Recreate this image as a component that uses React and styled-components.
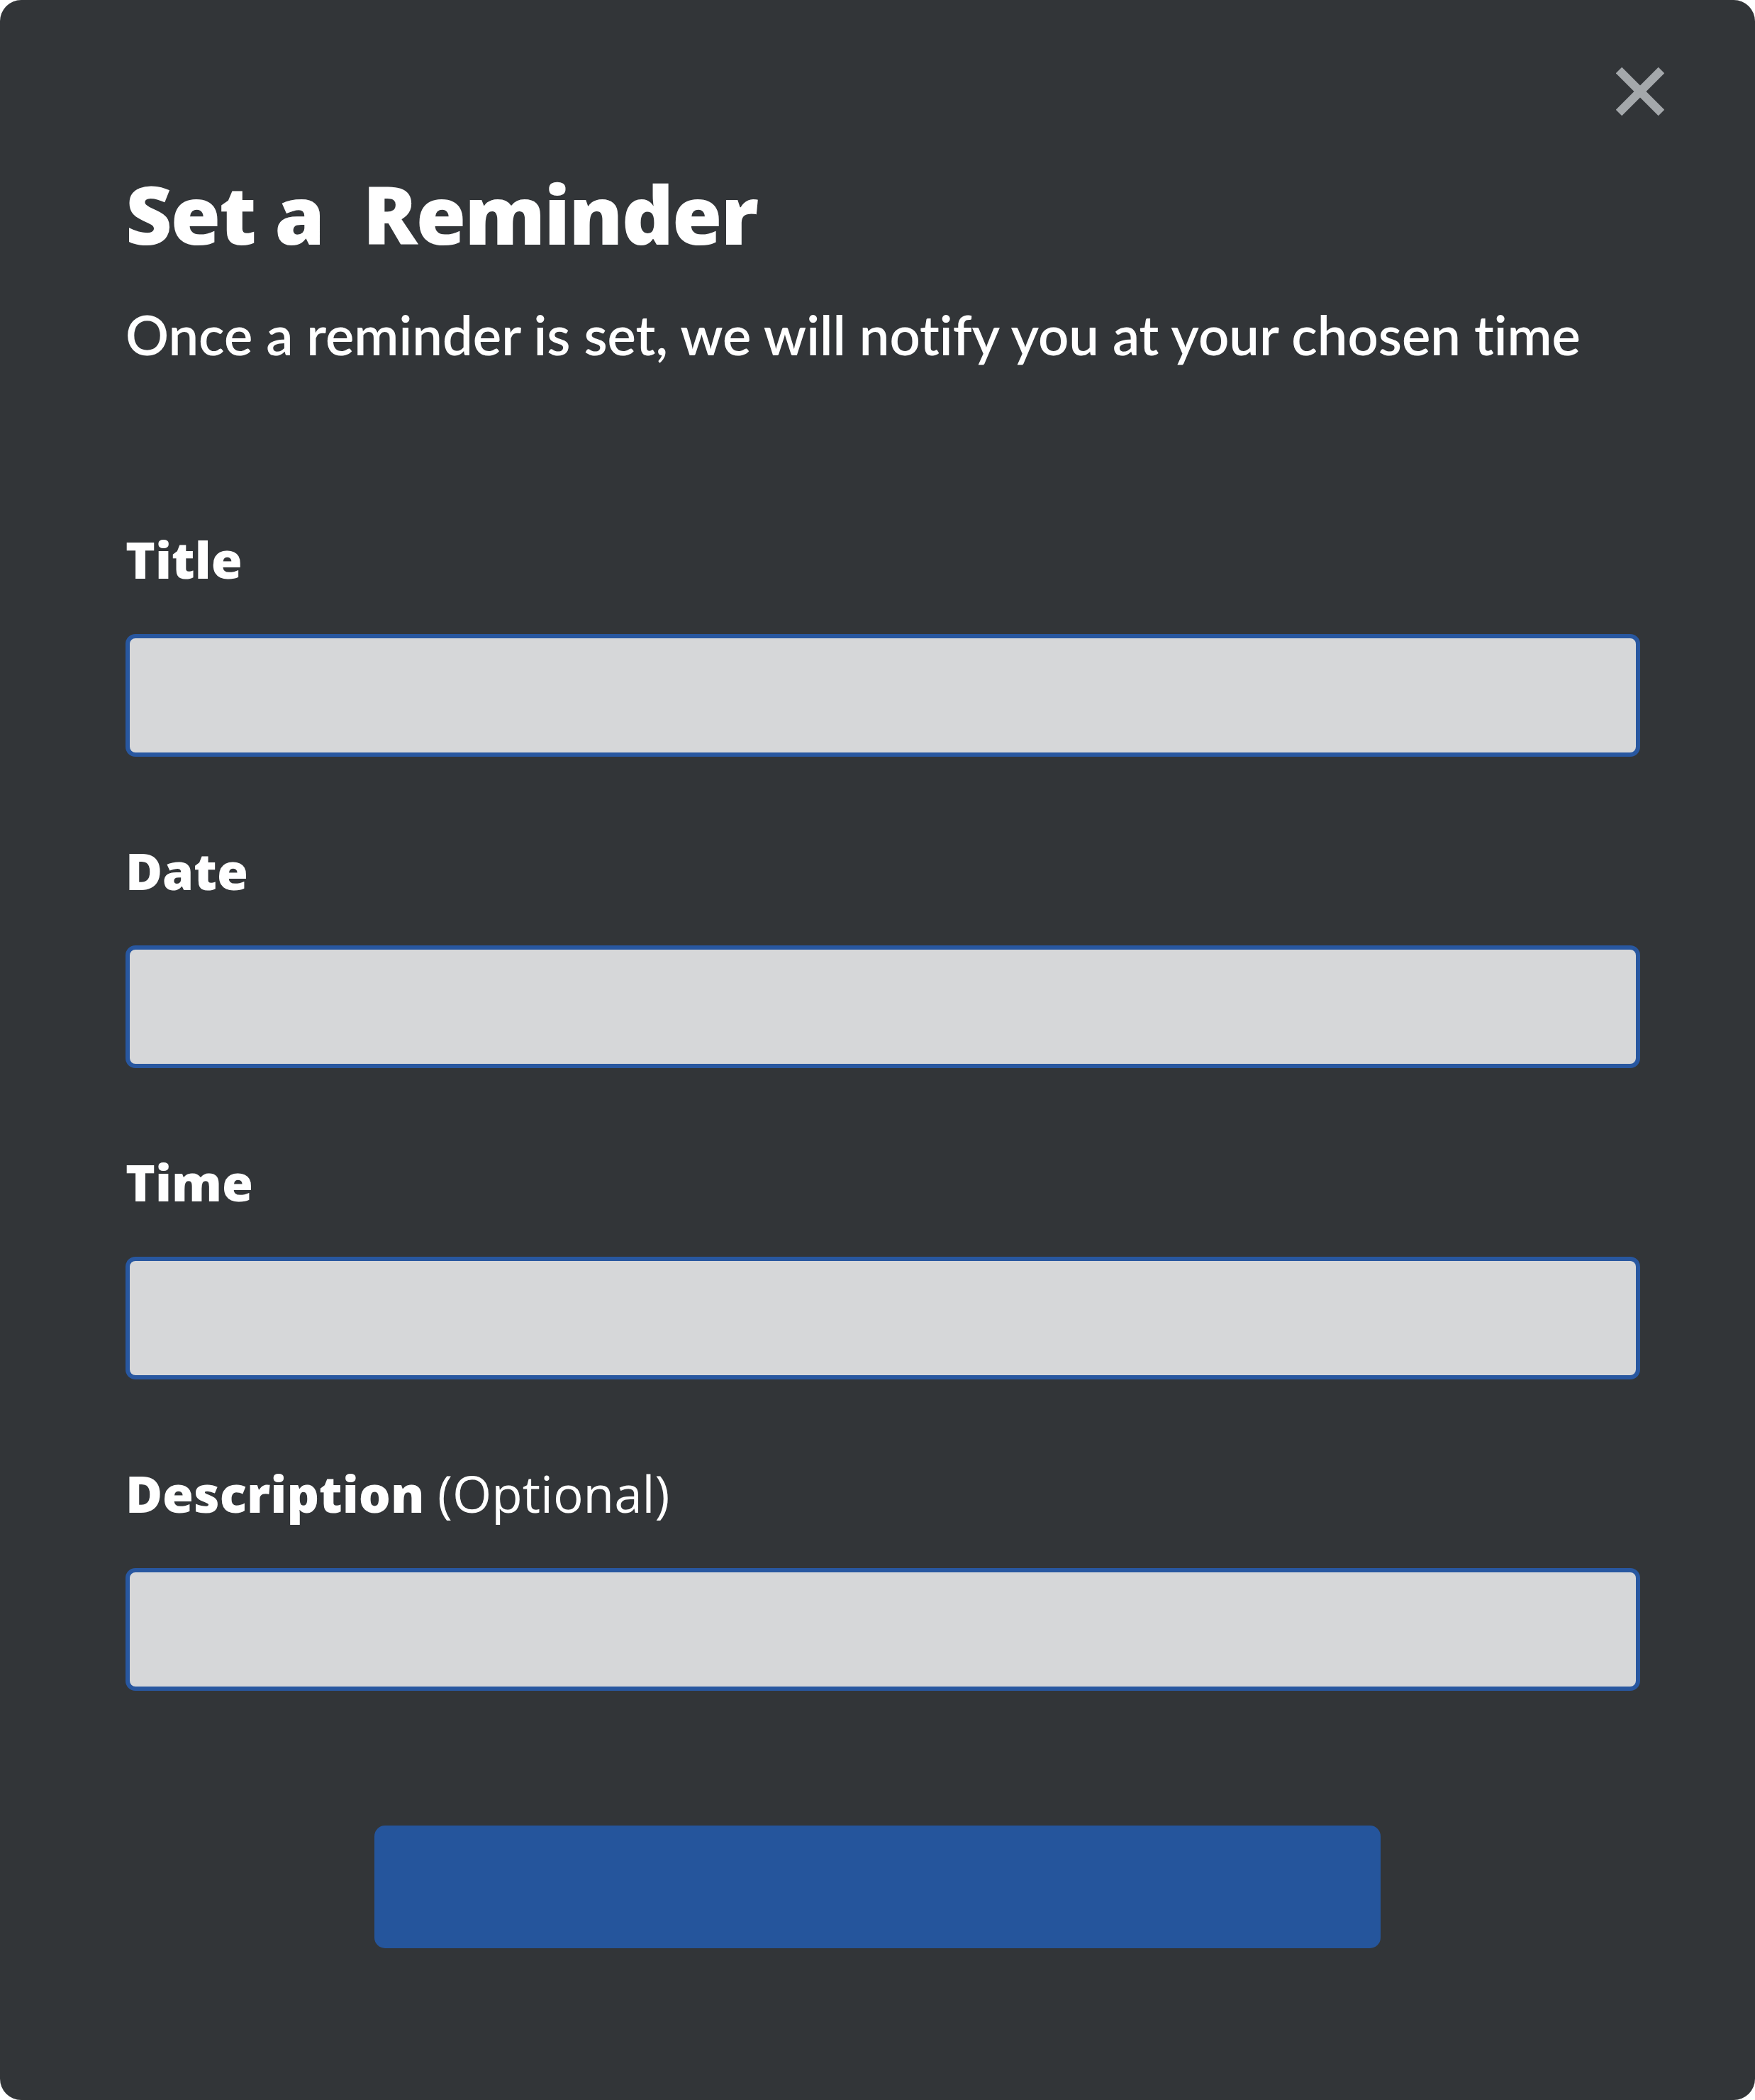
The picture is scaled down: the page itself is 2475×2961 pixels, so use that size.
import React from "react";
import styled, { createGlobalStyle } from "styled-components";

const GlobalStyle = createGlobalStyle`
  html, body {
    margin: 0;
    padding: 0;
    background: #ffffff;
  }
  * {
    box-sizing: border-box;
  }
`;

export default function App() {
  return (
    <>
      <GlobalStyle />
      <Panel>
        <CloseButton aria-label="Close">
          <svg width="68" height="68" viewBox="0 0 68 68">
            <line x1="4" y1="4" x2="64" y2="64" />
            <line x1="64" y1="4" x2="4" y2="64" />
          </svg>
        </CloseButton>

        <Heading>Set a&nbsp; Reminder</Heading>
        <Subtitle>Once a reminder is set, we will notify you at your chosen time</Subtitle>

        <Form>
          <Field>
            <Label>Title</Label>
            <Input type="text" />
          </Field>
          <Field>
            <Label>Date</Label>
            <Input type="text" />
          </Field>
          <Field>
            <Label>Time</Label>
            <Input type="text" />
          </Field>
          <Field>
            <Label>
              Description <Optional>(Optional)</Optional>
            </Label>
            <Input type="text" />
          </Field>
        </Form>

        <ButtonRow>
          <SubmitButton type="button" />
        </ButtonRow>
      </Panel>
    </>
  );
}

const Panel = styled.div`
  position: relative;
  height: 100vh;
  background: #323538;
  border-radius: 30px;
  padding: 232px 162px 0 177px;
  font-family: "Open Sans", "Noto Sans", sans-serif;
  color: #ffffff;
  overflow: hidden;
`;

const CloseButton = styled.button`
  position: absolute;
  top: 95px;
  right: 128px;
  width: 68px;
  height: 68px;
  padding: 0;
  border: none;
  background: none;
  cursor: pointer;

  svg {
    display: block;
  }

  line {
    stroke: #a4a8ab;
    stroke-width: 12;
  }
`;

const Heading = styled.h1`
  margin: 0;
  font-size: 114px;
  line-height: 137px;
  font-weight: 800;
  letter-spacing: -2px;
`;

const Subtitle = styled.p`
  margin: 53px 0 0;
  font-family: Lato, "Open Sans", sans-serif;
  font-size: 76px;
  line-height: 100px;
  font-weight: 600;
  font-variant-ligatures: none;
  white-space: nowrap;
`;

const Form = styled.div`
  display: flex;
  flex-direction: column;
  gap: 113px;
  margin-top: 219px;
`;

const Field = styled.div`
  display: flex;
  flex-direction: column;
  gap: 58px;
`;

const Label = styled.label`
  font-size: 71px;
  line-height: 95px;
  font-weight: 800;
`;

const Optional = styled.span`
  font-weight: 500;
`;

const Input = styled.input`
  display: block;
  width: 100%;
  height: 173px;
  margin: 0;
  border: 6px solid #2857a0;
  border-radius: 14px;
  background: #d6d7d9;
  outline: none;
`;

const ButtonRow = styled.div`
  display: flex;
  justify-content: center;
  margin: 190px -162px 0 -177px;
`;

const SubmitButton = styled.button`
  width: 1419px;
  height: 173px;
  border: none;
  border-radius: 15px;
  background: #25559c;
  cursor: pointer;
`;
